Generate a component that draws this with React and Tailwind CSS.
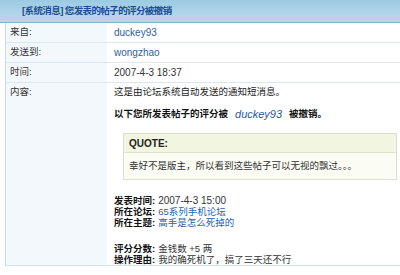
import React from 'react';

const font = "font-['Liberation_Sans','Noto_Sans_CJK_SC',sans-serif]";

const InfoRow = ({ label, children, latin }) => (
    <div className="grid grid-cols-[101px_1fr] h-[20px] border-b border-[#dce7ef]">
        <div className="bg-[#f3f8fc] pl-[4px] flex items-center text-[#333] text-[9.5px]">{label}</div>
        <div className={`bg-white pl-[7px] flex items-center ${latin ? 'text-[10px]' : 'text-[9.5px]'}`}>{children}</div>
    </div>
);

const Meta = ({ label, children }) => (
    <div className="h-[11px] leading-[11px] flex items-center whitespace-nowrap">
        <span className="font-bold text-[#111]">{label}:</span>
        <span className="ml-[3px]">{children}</span>
    </div>
);

export default function App() {
    return (
        <div className={`w-[400px] h-[275px] bg-white overflow-hidden ${font}`}>
            <div className="h-[23px] border-b border-[#83b1c8] bg-[linear-gradient(#9ccae3,#b3d7eb_70%,#c3cbea_78%,#b5d8ec)] flex items-center pl-[22px]">
                <span className="text-[9.5px] font-bold text-[#1c4c90] tracking-[-0.6px]">[系统消息] 您发表的帖子的评分被撤销</span>
            </div>
            <div className="ml-[5px] border-l border-[#c9dae6]">
                <InfoRow label="来自:" latin>
                    <span className="text-[#2a62a0]">duckey93</span>
                </InfoRow>
                <InfoRow label="发送到:" latin>
                    <span className="text-[#2a62a0]">wongzhao</span>
                </InfoRow>
                <InfoRow label="时间:" latin>
                    <span className="text-[#333]">2007-4-3 18:37</span>
                </InfoRow>
                <div className="grid grid-cols-[101px_1fr] h-[183px] border-b border-[#d3e2ec]">
                    <div className="bg-[#f3f8fc] pl-[4px] pt-[3px] text-[#333] text-[9.5px] leading-[12px]">内容:</div>
                    <div className="bg-white pl-[7px] pr-[2px] pt-[3px] text-[9.5px] text-[#222]">
                        <div className="leading-[12px]">这是由论坛系统自动发送的通知短消息。</div>
                        <div className="mt-[10px] leading-[12px] font-bold text-[#111] whitespace-nowrap flex items-center">
                            <span>以下您所发表帖子的评分被</span>
                            <span className="mx-[7px] font-normal italic text-[11px] text-[#1f5a9c]">duckey93</span>
                            <span>被撤销。</span>
                        </div>
                        <div className="mt-[13px] ml-[9px] mr-[1px] border border-[#dcdfc6]">
                            <div className="h-[19px] bg-[#f2f5e0] border-b border-[#e0e3cc] flex items-center pl-[5px] font-bold text-[#222] text-[10px]">QUOTE:</div>
                            <div className="h-[26px] bg-[#fbfcf3] flex items-center pl-[5px] text-[#333]">幸好不是版主，所以看到这些帖子可以无视的飘过。。。</div>
                        </div>
                        <div className="mt-[15px] text-[#333]">
                            <Meta label="发表时间"><span className="text-[10px]">2007-4-3 15:00</span></Meta>
                            <Meta label="所在论坛"><span className="text-[#2a62a8]">65系列手机论坛</span></Meta>
                            <Meta label="所在主题"><span className="text-[#2a62a8]">高手是怎么死掉的</span></Meta>
                            <div className="h-[15px]" />
                            <Meta label="评分分数">金钱数 +5 两</Meta>
                            <Meta label="操作理由">我的确死机了，搞了三天还不行</Meta>
                        </div>
                    </div>
                </div>
            </div>
        </div>
    );
}
